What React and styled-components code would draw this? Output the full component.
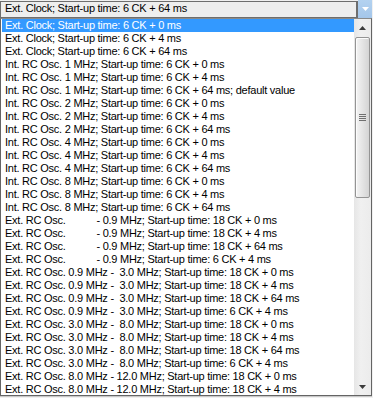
import React from 'react'
import styled, { createGlobalStyle } from 'styled-components'

const GlobalStyle = createGlobalStyle`
  html, body {
    margin: 0;
    padding: 0;
    background: #f0f0f0;
  }
`

const Frame = styled.div`
  width: 373px;
  height: 398px;
  overflow: hidden;
  background: #f0f0f0;
  font-family: "Liberation Sans", Arial, sans-serif;
  font-size: 11px;
  letter-spacing: -0.25px;
  color: #000;
`

const Combo = styled.div`
  display: flex;
  width: 372px;
  height: 18px;
`

const ComboField = styled.div`
  flex: 1;
  margin-top: 1px;
  height: 13px;
  padding: 0 0 2px 4px;
  border: 1px solid #6e6e6e;
  border-right: 2px solid #6e6e6e;
  background: #eeeeee;
  line-height: 13px;
  white-space: pre;
  overflow: hidden;
`

const ComboButton = styled.div`
  width: 14px;
  height: 18px;
  background: linear-gradient(#b3d2f0, #a4c6ea);
  display: flex;
  align-items: center;
  justify-content: center;
`

const List = styled.div`
  display: flex;
  width: 370px;
  height: 376px;
  border: 1px solid #646464;
  border-top-color: #8a8a8a;
  background: #fff;
  box-shadow: 0 1px 0 #c8c8c8;
`

const Items = styled.div`
  flex: 1;
  overflow: hidden;
  padding-left: 1px;
`

const Row = styled.div`
  height: 13px;
  line-height: 13px;
  padding-left: 3px;
  white-space: pre;
  background: ${p => (p.$active ? '#3399ff' : 'transparent')};
  color: ${p => (p.$active ? '#fff' : '#000')};
`

const ScrollBar = styled.div`
  width: 17px;
  display: flex;
  flex-direction: column;
  background: linear-gradient(90deg, #e6e6e6, #f0f0f0 40%, #ececec);
`

const ArrowButton = styled.div`
  height: 17px;
  display: flex;
  align-items: center;
  justify-content: center;
`

const Thumb = styled.div`
  height: 159px;
  margin: 1px 1px 0 1px;
  border: 1px solid #949494;
  border-radius: 2px;
  background: linear-gradient(90deg, #f4f4f4, #e4e4e4 50%, #d4d4d4);
  box-shadow: inset 1px 1px 0 #fcfcfc;
  display: flex;
  align-items: center;
  justify-content: center;
`

const Track = styled.div`
  flex: 1;
`

const Triangle = ({ dir, color }) => (
  <svg width="7" height="4" viewBox="0 0 7 4">
    {dir === 'up'
      ? <path d="M3.5 0 L7 4 L0 4 Z" fill={color} />
      : <path d="M0 0 L7 0 L3.5 4 Z" fill={color} />}
  </svg>
)

const Gripper = () => (
  <svg width="7" height="7" viewBox="0 0 7 7">
    {[0, 2, 4, 6].map(y => (
      <rect key={y} x="0" y={y} width="7" height="1" fill="#6f6f6f" />
    ))}
  </svg>
)

const ST = 'Start-up time:'
const PAD = '           '

const rows = [
  `Ext. Clock; ${ST} 6 CK + 0 ms`,
  `Ext. Clock; ${ST} 6 CK + 4 ms`,
  `Ext. Clock; ${ST} 6 CK + 64 ms`,
  `Int. RC Osc. 1 MHz; ${ST} 6 CK + 0 ms`,
  `Int. RC Osc. 1 MHz; ${ST} 6 CK + 4 ms`,
  `Int. RC Osc. 1 MHz; ${ST} 6 CK + 64 ms; default value`,
  `Int. RC Osc. 2 MHz; ${ST} 6 CK + 0 ms`,
  `Int. RC Osc. 2 MHz; ${ST} 6 CK + 4 ms`,
  `Int. RC Osc. 2 MHz; ${ST} 6 CK + 64 ms`,
  `Int. RC Osc. 4 MHz; ${ST} 6 CK + 0 ms`,
  `Int. RC Osc. 4 MHz; ${ST} 6 CK + 4 ms`,
  `Int. RC Osc. 4 MHz; ${ST} 6 CK + 64 ms`,
  `Int. RC Osc. 8 MHz; ${ST} 6 CK + 0 ms`,
  `Int. RC Osc. 8 MHz; ${ST} 6 CK + 4 ms`,
  `Int. RC Osc. 8 MHz; ${ST} 6 CK + 64 ms`,
  `Ext. RC Osc.${PAD}- 0.9 MHz; ${ST} 18 CK + 0 ms`,
  `Ext. RC Osc.${PAD}- 0.9 MHz; ${ST} 18 CK + 4 ms`,
  `Ext. RC Osc.${PAD}- 0.9 MHz; ${ST} 18 CK + 64 ms`,
  `Ext. RC Osc.${PAD}- 0.9 MHz; ${ST} 6 CK + 4 ms`,
  `Ext. RC Osc. 0.9 MHz -  3.0 MHz; ${ST} 18 CK + 0 ms`,
  `Ext. RC Osc. 0.9 MHz -  3.0 MHz; ${ST} 18 CK + 4 ms`,
  `Ext. RC Osc. 0.9 MHz -  3.0 MHz; ${ST} 18 CK + 64 ms`,
  `Ext. RC Osc. 0.9 MHz -  3.0 MHz; ${ST} 6 CK + 4 ms`,
  `Ext. RC Osc. 3.0 MHz -  8.0 MHz; ${ST} 18 CK + 0 ms`,
  `Ext. RC Osc. 3.0 MHz -  8.0 MHz; ${ST} 18 CK + 4 ms`,
  `Ext. RC Osc. 3.0 MHz -  8.0 MHz; ${ST} 18 CK + 64 ms`,
  `Ext. RC Osc. 3.0 MHz -  8.0 MHz; ${ST} 6 CK + 4 ms`,
  `Ext. RC Osc. 8.0 MHz - 12.0 MHz; ${ST} 18 CK + 0 ms`,
  `Ext. RC Osc. 8.0 MHz - 12.0 MHz; ${ST} 18 CK + 4 ms`,
]

export default function App() {
  return (
    <Frame>
      <GlobalStyle />
      <Combo>
        <ComboField>{`Ext. Clock; ${ST} 6 CK + 64 ms`}</ComboField>
        <ComboButton>
          <Triangle dir="down" color="#ffffff" />
        </ComboButton>
      </Combo>
      <List>
        <Items>
          {rows.map((text, i) => (
            <Row key={i} $active={i === 0}>{text}</Row>
          ))}
        </Items>
        <ScrollBar>
          <ArrowButton>
            <Triangle dir="up" color="#3c3c3c" />
          </ArrowButton>
          <Thumb>
            <Gripper />
          </Thumb>
          <Track />
          <ArrowButton>
            <Triangle dir="down" color="#3c3c3c" />
          </ArrowButton>
        </ScrollBar>
      </List>
    </Frame>
  )
}
